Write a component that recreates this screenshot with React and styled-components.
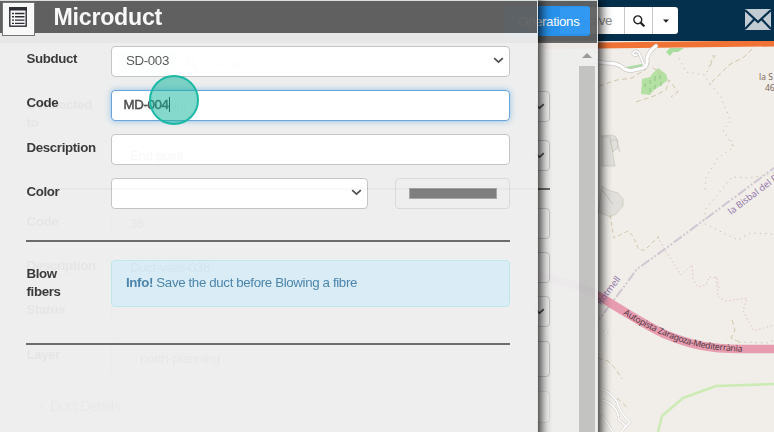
import React from 'react';
import styled, { createGlobalStyle, css } from 'styled-components';

const GlobalStyle = createGlobalStyle`
  *, *::before, *::after { box-sizing: border-box; }
  html, body { margin: 0; padding: 0; overflow: hidden; }
  body {
    font-family: "Liberation Sans", Arial, sans-serif;
    font-size: 13.3px;
    letter-spacing: -0.36px;
    line-height: 18px;
    color: #333;
  }
`;

const Screen = styled.main`
  position: relative;
  width: 774px;
  height: 432px;
  overflow: hidden;
  background: #f1eee9;
`;

const MapCanvas = styled.svg`
  position: absolute;
  inset: 0;
  display: block;
  letter-spacing: 0;
`;

const TopBar = styled.header`
  position: relative;
  display: flex;
  align-items: flex-start;
  justify-content: space-between;
  height: 41px;
  padding: 7px 3px 0 560px;
  background: #04304e;
`;

const SearchGroup = styled.div`
  display: flex;
  height: 27px;
  border-radius: 3px;
  overflow: hidden;
  background: #fff;
`;

const SearchText = styled.div`
  width: 64px;
  padding: 5px 12px 0 0;
  text-align: right;
  color: #8c8c8c;
`;

const SearchButton = styled.div`
  display: flex;
  align-items: center;
  justify-content: center;
  width: ${(p) => p.$width}px;
  border-left: 1px solid #c4c8cc;
`;

const MailIcon = styled.svg`
  display: block;
  margin-top: 2px;
`;

const Panel = styled.section`
  position: absolute;
  top: 0;
  left: 0;
  width: ${(p) => p.$width}px;
  height: 441px;
  background: #eee;
  border-top: 1px solid #dbe0de;
  border-right: 1px solid #e6e6e6;
  opacity: ${(p) => p.$opacity};
  box-shadow: 2px 0 10px 1px rgba(0, 0, 0, 0.9);
`;

const PanelHeader = styled.div`
  display: flex;
  align-items: flex-start;
  height: ${(p) => p.$height}px;
  background: #616161;
  color: #fff;
`;

const ListBadge = styled.div`
  display: flex;
  justify-content: center;
  flex: none;
  width: 33px;
  height: 34px;
  margin: 1px 0 0 2px;
  padding: 4px 1px 0 0;
  background: #fff;
  border: 1px solid #777;
`;

const Title = styled.h1`
  margin: 0 0 0 18.5px;
  font-size: 23.2px;
  letter-spacing: -0.25px;
  line-height: 32px;
  font-weight: 700;
`;

const OperationsButton = styled.div`
  width: 86px;
  height: 30px;
  margin: 5px 7px 0 auto;
  padding: 7px 0 0 14px;
  border-radius: 3px;
  background: #2895f2;
`;

const Form = styled.div`
  width: 510px;
  padding: 13px 0 0 26px;
  display: flex;
  flex-direction: column;
  gap: 13px;
`;

const Row = styled.div`
  display: grid;
  grid-template-columns: 85px 1fr;
  align-items: start;
  height: ${(p) => p.$height || 31}px;
`;

const Label = styled.div`
  padding: ${(p) => p.$top ?? 3}px 0 0 0.5px;
  font-weight: 700;
  white-space: nowrap;
`;

const Field = styled.div`
  display: flex;
  align-items: center;
  justify-content: space-between;
  height: ${(p) => p.$height || 31}px;
  padding: 0 5px 2px 14px;
  border: 1px solid #c3c3c3;
  border-radius: 4px;
  background: #fff;
  color: #555;
  ${(p) => p.$focused && css`
    border-color: #66a3d9;
    box-shadow: 0 0 6px rgba(102, 175, 233, 0.75);
    padding-left: 11.5px;
    color: #444;
  `}
`;

const TypedText = styled.span`
  line-height: 15px;
  border-right: 1px solid #222;
  -webkit-text-stroke: 0.45px #444;
`;

const ColorRow = styled.div`
  display: grid;
  grid-template-columns: 257px 115px;
  justify-content: space-between;
`;

const Swatch = styled.div`
  height: 31px;
  padding: 9px 12px 9px 13px;
  border: 1px solid #d9d9d9;
  border-radius: 4px;
  &::before {
    content: "";
    display: block;
    height: 11px;
    background: #7a7a7a;
    border: 1px solid #a5a5a5;
  }
`;

const Rule = styled.hr`
  width: 100%;
  height: 2px;
  margin: ${(p) => p.$margin || 0};
  border: 0;
  background: #666;
`;

const Info = styled.div`
  height: 47px;
  padding: 13px 14px;
  border: 1px solid #bce8ec;
  border-radius: 4px;
  background: #d9edf7;
  color: #4580a8;
`;

const BackBody = styled.div`
  display: flex;
  justify-content: space-between;
  padding-right: 2px;
`;

const BackForm = styled.div`
  width: 550px;
  padding: 8px 0 0 26px;
`;

const BackRow = styled(Row)`
  margin-bottom: ${(p) => p.$after}px;
`;

const BackField = styled(Field)`
  background: #f1f1f1;
  padding: 0 4px 0 18px;
`;

const BackActions = styled.div`
  display: flex;
  height: 25px;
  margin: 0 0 15px 92px;
  gap: 10px;
  align-items: center;
  color: #ccc;
`;

const ActionBox = styled.div`
  width: 58px;
  height: 25px;
  background: #c8effc;
`;

const Details = styled.div`
  height: 32px;
  padding: 6px 12px;
  border: 1px solid #ddd;
  border-radius: 4px;
  background: #f4f4f4;
  color: #777;
  font-size: 13.8px;
`;

const Scrollbar = styled.div`
  width: 16px;
  height: 395px;
  padding-top: 10px;
  background: #eeeeee;
`;

const ArrowUp = styled.div`
  width: 10px;
  height: 5px;
  margin: 0 auto 8px;
  background: #979797;
  clip-path: polygon(50% 0, 100% 100%, 0 100%);
`;

const Thumb = styled.div`
  height: 372px;
  background: #c1c1c1;
`;

const ClickMarker = styled.div`
  position: absolute;
  left: 149px;
  top: 75px;
  width: 50px;
  height: 50px;
  border: 2px solid #1bb9a5;
  border-radius: 50%;
  background: rgba(20, 181, 158, 0.52);
`;

const Chevron = () => (
  <svg width="11" height="7" viewBox="0 0 11 7" fill="none">
    <path d="M1.2 1.2l4.3 3.9 4.3-3.9" stroke="#484848" strokeWidth="1.8" />
  </svg>
);

const ListIcon = () => (
  <svg width="18" height="20" viewBox="0 0 18 20">
    <rect x=".8" y=".8" width="16.4" height="18.4" fill="#fff" stroke="#2c2c34" strokeWidth="1.4" />
    <path d="M0 1.8h18" stroke="#2c2c34" strokeWidth="3.4" />
    <path d="M3 6.5h2m-2 3.3h2m-2 3.3h2m-2 3.3h2M6 6.5h9.5m-9.5 3.3h9.5m-9.5 3.3h9.5m-9.5 3.3h9.5" stroke="#2c2c34" strokeWidth="1.4" />
  </svg>
);

const SearchIcon = ({ size = 12, color = '#222' }) => (
  <svg width={size} height={size} viewBox="0 0 11 11" fill="none" stroke={color}>
    <circle cx="4.4" cy="4.4" r="3.6" strokeWidth="1.3" />
    <path d="M7 7l3.4 3.4" strokeWidth="2" />
  </svg>
);

const MAIN_LANE = 'M590 61 L606 63 Q617 63 622 67 Q627 72 634 70 L643 68 Q648 67 647 58 Q649 51 656 46';
const SIDE_LANE = 'M644 65 L639 53 Q635 49 633 53 Q633 56 637 55';
const SOUTH_LANES = 'M596 387 Q612 392 617 402 Q620 413 630 422 L621 432 M602 400 Q618 405 619 420 L626 426 M602 416 L613 432 M604 335 L607 330';

function RoadMap() {
  return (
    <MapCanvas width="774" height="432" viewBox="0 0 774 432" fill="none" fontFamily='"Noto Sans", sans-serif'>
      <path d="M540 46.5 L598 45.5 L774 43.5" stroke="#f07335" strokeWidth="6" />
      <path d="M642 79l8-2 3-4 5-5 8 6 2 6-8 6-6 4-4 5-9-1z" fill="#b5e0a3" />
      <path d="M645 83v4m5-7v4m5-8v5m5-6v4m-10 9v4m5-7v4m6-7v4" stroke="#8cc584" />
      <path d="M666 52l4-4h14l-6 4-5 0-3 4z" fill="#a9dda0" />
      <path d="M626 67l16-3 1 5-12 2z" fill="#a9dda0" />
      <g strokeLinejoin="round" strokeLinecap="round">
        <path d={SIDE_LANE} stroke="#d0cdcb" strokeWidth="3" />
        <path d={MAIN_LANE} stroke="#ccc9c7" strokeWidth="4.5" />
        <path d={MAIN_LANE} stroke="#fff" strokeWidth="3" />
        <path d={SIDE_LANE} stroke="#fff" strokeWidth="1.7" />
        <path d={SOUTH_LANES} stroke="#d3d0ce" strokeWidth="2.6" />
        <path d={SOUTH_LANES} stroke="#fff" strokeWidth="1.5" />
      </g>
      <path d="M602 137h8l5 29h-13zM610 140h8l-1 8-4 4zM602 186l6 4 10 3 5 6v7l-7 8-6 3-12-5zM600 136l12-1 4 2 4 15" fill="#e0dfdc" stroke="#c4c1b2" strokeWidth=".6" />
      <path d="M602 190l11 14" stroke="#b5b5b5" strokeWidth=".7" />
      <path d="M599 86l18-6 15-2 14-9M636 102l18-6 12-6 3-10 9 12-7 5M653 68l9 6M598 358l10 3 7 7 7 11M617 398l12 11M732 320l3 10-4 8 8 4M710 66l5-11M752 49l-8 8-15 8-19 19" stroke="#d3c6aa" strokeWidth="1" strokeDasharray="5 3" />
      <path d="M679 58l7 14 19 3 5 10M713 55l-7 20M710 84l11 13 3 8 7 16-8 9 11 18M731 140l3 7-16 11-12 19-1 15M774 173l-24 5-18-1-14 17-13 16v14l33 16 12-7 24 1M739 342l28 1 7-3" stroke="#cfc6b2" strokeWidth="1" strokeDasharray="1.5 4" />
      <path d="M658 237l8 15 15 23 11-10 1 14 5 8 8-2 3-8 8 1 2 10M716 277l2 20 8 4 21-3-4 13 11 20 20-6" stroke="#e2c2be" strokeWidth="1" strokeDasharray="1.5 2.5" />
      <path d="M610 215l4 23 14-7 5 5 6 14 6 0 14-14" stroke="#d3c7a8" strokeDasharray="4 3" />
      <path d="M778 165L665 249 637 269 626 284 594 326" stroke="#d0c7d2" strokeWidth="2" strokeDasharray="10 2 2 2 2 2" />
      <path d="M658 432l4-16 21-18 33-12 58-2" stroke="#cdebb4" strokeWidth="2.6" strokeLinejoin="round" />
      <path d="M536 276 Q575 282 602 298 Q644 324 662 333 C690 345 710 349 740 349 H774" stroke="#e79caf" strokeWidth="8.5" />
      <path id="motorwayLabel" d="M623 314 Q647 329 663 335 C690 347 710 351 755 352" />
      <text fontSize="8.8" fill="#513944"><textPath href="#motorwayLabel" textLength="127">Autopista Zaragoza-Mediterrània</textPath></text>
      <g fill="#9579ad" fontSize="9.2">
        <text transform="translate(731 215) rotate(-37)">la Bisbal del P</text>
        <text transform="translate(621 279) rotate(-53)" textAnchor="end">Rotmell</text>
      </g>
      <g fill="#806b59" fontSize="8.5">
        <text x="759" y="80">la S</text>
        <text x="765" y="90.5">46</text>
      </g>
    </MapCanvas>
  );
}

function DuctPanel() {
  return (
    <Panel $width={598} $opacity={0.96}>
      <PanelHeader $height={42}>
        <OperationsButton>Operations</OperationsButton>
      </PanelHeader>
      <BackBody>
        <BackForm>
          <BackActions><ActionBox /><SearchIcon color="#bbb" />Center</BackActions>
          <BackRow $after={18}><Label $top={5}>Connected<br />to</Label><BackField>Start point<Chevron /></BackField></BackRow>
          <BackRow $after={17}><span /><BackField>End point<Chevron /></BackField></BackRow>
          <Rule $margin="0 0 18px" />
          <BackRow $after={13}><Label $top={5}>Code</Label><BackField>36</BackField></BackRow>
          <BackRow $after={13}><Label $top={5}>Description</Label><BackField>Duct-valls-036</BackField></BackRow>
          <BackRow $after={14}><Label $top={5}>Status</Label><BackField><span /><Chevron /></BackField></BackRow>
          <BackRow $height={36} $after={14}><Label $top={5}>Layer</Label><BackField $height={36}>&nbsp;&nbsp; north-planning</BackField></BackRow>
          <Details>›&nbsp; Duct Details</Details>
        </BackForm>
        <Scrollbar><ArrowUp /><Thumb /></Scrollbar>
      </BackBody>
    </Panel>
  );
}

function MicroductPanel() {
  return (
    <Panel $width={538} $opacity={0.955}>
      <PanelHeader $height={32}>
        <ListBadge><ListIcon /></ListBadge>
        <Title>Microduct</Title>
      </PanelHeader>
      <Form>
        <Row><Label $top={4}>Subduct</Label><Field>SD-003<Chevron /></Field></Row>
        <Row><Label $top={4}>Code</Label><Field $focused><TypedText>MD-004</TypedText></Field></Row>
        <Row><Label $top={5}>Description</Label><Field /></Row>
        <Row>
          <Label $top={5}>Color</Label>
          <ColorRow><Field><span /><Chevron /></Field><Swatch /></ColorRow>
        </Row>
        <Rule $margin="18px 0 5px" />
        <Row $height={47}><Label $top={5}>Blow<br />fibers</Label><Info><b>Info!</b> Save the duct before Blowing a fibre</Info></Row>
        <Rule $margin="23px 0 0" />
      </Form>
    </Panel>
  );
}

export default function App() {
  return (
    <>
      <GlobalStyle />
      <Screen>
        <RoadMap />
        <TopBar>
          <SearchGroup>
            <SearchText>Active</SearchText>
            <SearchButton $width={28}><SearchIcon /></SearchButton>
            <SearchButton $width={26}><svg width="6" height="4"><path d="M0 .5h6L3 3.7z" fill="#222" /></svg></SearchButton>
          </SearchGroup>
          <MailIcon width="26" height="21" viewBox="0 0 26 21">
            <rect width="26" height="21" fill="#c3ccd3" />
            <path d="M0 1l13 12L26 1M0 20l9.5-10M26 20L16.5 10" fill="none" stroke="#04304e" strokeWidth="2.2" />
          </MailIcon>
        </TopBar>
        <DuctPanel />
        <MicroductPanel />
        <ClickMarker />
      </Screen>
    </>
  );
}
